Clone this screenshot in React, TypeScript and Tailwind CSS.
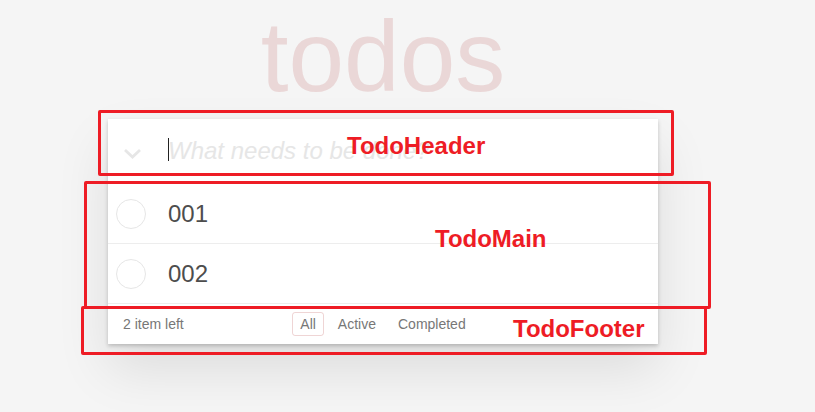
import React from 'react';

interface Todo {
    id: number;
    title: string;
    done: boolean;
}

const todos: Todo[] = [
    { id: 1, title: '001', done: false },
    { id: 2, title: '002', done: false },
];

const filters = ['All', 'Active', 'Completed'];

const TodoHeader: React.FC = () => (
    <header className="relative flex h-[65px] items-center border-b border-[#e6e6e6]">
        <div className="flex w-[60px] shrink-0 pl-[15px] pt-[4px]">
            <svg width="19" height="11" viewBox="0 0 19 11" fill="none">
                <polyline points="2,2 9.5,9 17,2" stroke="#e6e6e6" strokeWidth="2.8" />
            </svg>
        </div>
        <input
            className="h-full w-full bg-transparent pr-4 text-[24px] text-[#4d4d4d] caret-transparent outline-none placeholder:italic placeholder:text-[#e6e6e6]"
            placeholder="What needs to be done?"
            readOnly
        />
        {/* static text caret, the input is focused in the picture */}
        <span className="absolute left-[60px] top-[19px] h-[23px] w-px bg-[#222]" />
    </header>
);

const TodoItem: React.FC<{ todo: Todo }> = ({ todo }) => (
    <li className="flex h-[60px] items-center border-b border-[#ededed]">
        <div className="flex w-[60px] shrink-0 pl-[8px]">
            <span className="h-[30px] w-[30px] rounded-full border border-[#e6e6e6]" />
        </div>
        <label className="text-[24px] text-[#4d4d4d]">{todo.title}</label>
    </li>
);

const TodoMain: React.FC = () => (
    <ul>
        {todos.map(t => (
            <TodoItem key={t.id} todo={t} />
        ))}
    </ul>
);

const TodoFooter: React.FC = () => {
    const left = todos.filter(t => !t.done).length;
    return (
        <footer className="grid h-[40px] grid-cols-[1fr_auto_1fr] items-center px-[15px] text-[14px] text-[#777]">
            <span>{left} item left</span>
            <ul className="flex">
                {filters.map((f, i) => (
                    <li key={f} className="mx-[3px]">
                        <a
                            className={`block rounded-[3px] border px-[7px] py-[3px] leading-[16px] ${
                                i === 0 ? 'border-[rgba(175,47,47,0.2)]' : 'border-transparent'
                            }`}
                        >
                            {f}
                        </a>
                    </li>
                ))}
            </ul>
            <span />
        </footer>
    );
};

const Note: React.FC<{ box: string; label: string; labelPos: string }> = ({ box, label, labelPos }) => (
    <>
        <div className={`pointer-events-none absolute rounded-[2px] border-[3px] border-[#ee1c25] ${box}`} />
        <span className={`pointer-events-none absolute text-[24px] font-bold leading-[24px] text-[#ee1c25] ${labelPos}`}>
            {label}
        </span>
    </>
);

export default function App() {
    return (
        <div className="relative h-[412px] w-[815px] overflow-hidden bg-[#f5f5f5] font-['Liberation_Sans',Arial,sans-serif]">
            <section className="ml-[108px] w-[550px]">
                <h1 className="pt-[6px] text-center text-[100px] font-normal leading-[100px] text-[rgba(175,47,47,0.15)]">
                    todos
                </h1>
                <div className="mt-[13px] bg-white shadow-[0_2px_4px_0_rgba(0,0,0,0.2),0_25px_50px_0_rgba(0,0,0,0.1)]">
                    <TodoHeader />
                    <TodoMain />
                    <TodoFooter />
                </div>
            </section>

            <Note box="left-[98px] top-[110px] h-[66px] w-[576px]" label="TodoHeader" labelPos="left-[347px] top-[134px]" />
            <Note box="left-[84px] top-[181px] h-[128px] w-[627px]" label="TodoMain" labelPos="left-[435px] top-[227px]" />
            <Note box="left-[81px] top-[306px] h-[49px] w-[626px]" label="TodoFooter" labelPos="left-[513px] top-[317px]" />
        </div>
    );
}
